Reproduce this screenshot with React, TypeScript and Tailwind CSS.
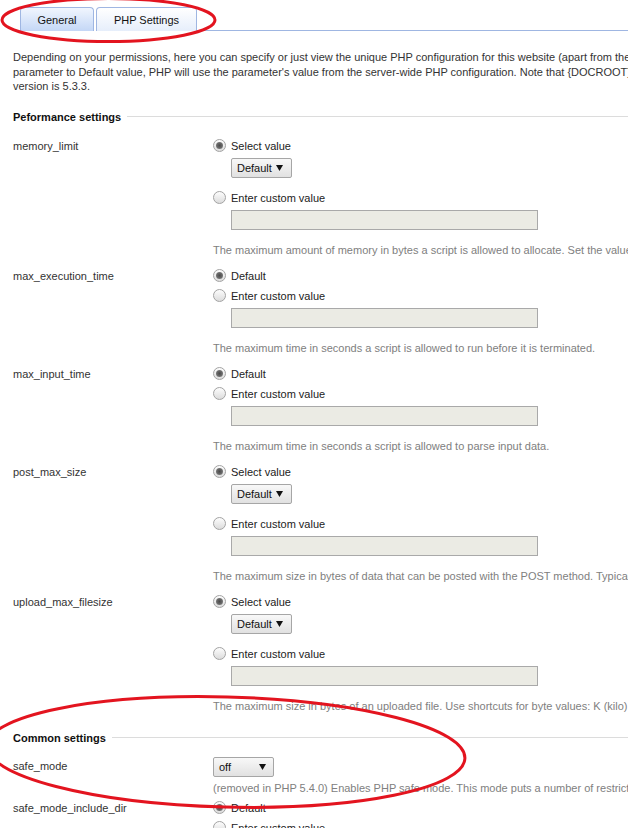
import React from "react";

const Radio = ({ checked, label }: { checked?: boolean; label: string }) => (
  <div className="flex items-center h-[20px] whitespace-nowrap">
    <span className="w-[13px] h-[13px] shrink-0 rounded-full border border-[#a3a3a3] bg-linear-to-b from-[#fdfdfd] to-[#dcdcdc] flex items-center justify-center">
      {checked && <span className="w-[7px] h-[7px] rounded-full bg-[radial-gradient(circle,#4a4a4a_0%,#6a6a6a_55%,#9a9a9a_100%)]" />}
    </span>
    <span className="ml-[5px] text-[#222]">{label}</span>
  </div>
);

const Arrow = () => (
  <svg width="7" height="6" viewBox="0 0 7 6" className="shrink-0">
    <path d="M0 0H7L3.5 6Z" fill="#111" />
  </svg>
);

const Select = ({ value, w, pr }: { value: string; w: string; pr: string }) => (
  <div
    className={`${w} ${pr} h-[20px] border border-[#a6a6a6] rounded-[2px] bg-linear-to-b from-[#f8f8f8] to-[#e1e1e1] flex items-center justify-between pl-[5px] text-[#111]`}
  >
    <span>{value}</span>
    <Arrow />
  </div>
);

const Input = () => (
  <div className="mt-[2px] w-[307px] h-[20px] border border-[#a9a9a9] bg-[#ebebe4]" />
);

const Hint = ({ text, cls }: { text: string; cls?: string }) => (
  <div className={`${cls ?? "mt-[13px]"} -ml-[18px] h-[14px] leading-[14px] text-[#808080] whitespace-nowrap`}>
    {text}
  </div>
);

const Row = ({ label, children, pb = "pb-[9px]" }: { label: string; children: React.ReactNode; pb?: string }) => (
  <div className={`grid grid-cols-[200px_1fr] ${pb}`}>
    <div className="h-[20px] flex items-center text-[#333] whitespace-nowrap">{label}</div>
    <div>{children}</div>
  </div>
);

const SelectRow = ({ label, hint }: { label: string; hint: string }) => (
  <Row label={label}>
    <Radio checked label="Select value" />
    <div className="ml-[18px] mt-[2px]">
      <Select value="Default" w="w-[61px]" pr="pr-[8px]" />
    </div>
    <div className="mt-[10px]">
      <Radio label="Enter custom value" />
    </div>
    <div className="ml-[18px]">
      <Input />
      <Hint text={hint} />
    </div>
  </Row>
);

const DefaultRow = ({ label, hint }: { label: string; hint: string }) => (
  <Row label={label}>
    <Radio checked label="Default" />
    <Radio label="Enter custom value" />
    <div className="ml-[18px]">
      <Input />
      <Hint text={hint} />
    </div>
  </Row>
);

const Header = ({ title, cls }: { title: string; cls: string }) => (
  <div className={`${cls} h-[16px] flex items-center`}>
    <span className="font-bold text-[#111] whitespace-nowrap">{title}</span>
    <span className="ml-[6px] flex-1 h-px bg-[#dcdcdc]" />
  </div>
);

export default function App() {
  return (
    <div className="relative w-[628px] h-[828px] overflow-hidden bg-white font-['Liberation_Sans',Arial,sans-serif] text-[11px] leading-[14px]">
      {/* Tabs */}
      <div className="flex pt-[7px] pl-[20px]">
        <div className="w-[74px] h-[24px] border border-b-0 border-[#9fb6e2] rounded-t-[4px] bg-linear-to-b from-[#f1f6fe] to-[#c4d7f6] flex items-center justify-center text-[#111]">
          General
        </div>
        <div className="ml-[2px] w-[101px] h-[24px] border border-b-0 border-[#9fb6e2] rounded-t-[4px] bg-linear-to-b from-[#ffffff] to-[#e6eefb] flex items-center justify-center text-[#111]">
          PHP Settings
        </div>
        <div className="flex-1 h-[24px] border-b border-[#9fb6e2]" />
      </div>

      <div className="pl-[13px]">
        {/* Description */}
        <div className="mt-[19px] leading-[14.5px] text-[#333] whitespace-nowrap">
          Depending on your permissions, here you can specify or just view the unique PHP configuration for this website (apart from the
          <br />
          parameter to Default value, PHP will use the parameter's value from the server-wide PHP configuration. Note that {"{DOCROOT}"} is
          <br />
          version is 5.3.3.
        </div>

        <Header title="Peformance settings" cls="mt-[15px]" />

        <div className="mt-[11px]">
          <SelectRow
            label="memory_limit"
            hint="The maximum amount of memory in bytes a script is allowed to allocate. Set the value to -1 to have no memory limit."
          />
          <DefaultRow
            label="max_execution_time"
            hint="The maximum time in seconds a script is allowed to run before it is terminated."
          />
          <DefaultRow
            label="max_input_time"
            hint="The maximum time in seconds a script is allowed to parse input data."
          />
          <SelectRow
            label="post_max_size"
            hint="The maximum size in bytes of data that can be posted with the POST method. Typically, should be larger"
          />
          <SelectRow
            label="upload_max_filesize"
            hint="The maximum size in bytes of an uploaded file. Use shortcuts for byte values: K (kilo), M (mega), G (giga)."
          />
        </div>

        <Header title="Common settings" cls="mt-[8px]" />

        <div className="mt-[10px]">
          <Row label="safe_mode" pb="pb-[3px]">
            <div className="pt-[1px]">
              <Select value="off" w="w-[61px]" pr="pr-[7px]" />
            </div>
            <div className="ml-[18px]">
              <Hint
                cls="mt-[4px]"
                text="(removed in PHP 5.4.0) Enables PHP safe mode. This mode puts a number of restrictions on scripts."
              />
            </div>
          </Row>
          <Row label="safe_mode_include_dir">
            <Radio checked label="Default" />
            <Radio label="Enter custom value" />
          </Row>
        </div>
      </div>

      {/* Red annotation ellipses */}
      <svg className="absolute left-0 top-0 pointer-events-none" width="628" height="828" viewBox="0 0 628 828">
        <ellipse cx="108.5" cy="20" rx="106.5" ry="21.5" fill="none" stroke="#e3141f" strokeWidth="3" />
        <ellipse cx="226" cy="752" rx="239" ry="55" fill="none" stroke="#e3141f" strokeWidth="3" transform="rotate(1.5 226 752)" />
      </svg>
    </div>
  );
}
